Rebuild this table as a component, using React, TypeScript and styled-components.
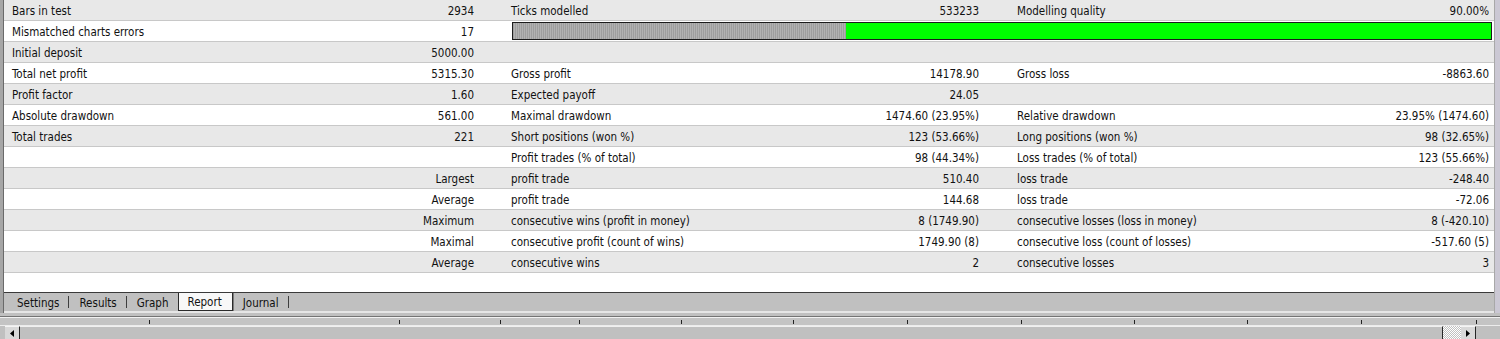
import React from "react";
import styled, { createGlobalStyle, css } from "styled-components";

const GlobalStyle = createGlobalStyle`
  html, body { margin: 0; padding: 0; }
  body {
    width: 1500px;
    height: 339px;
    overflow: hidden;
    background: #c0c0c0;
    font-family: "DejaVu Sans Condensed", "Liberation Sans", Arial, sans-serif;
    font-size: 11.5px;
    color: #111;
  }
`;

const Window = styled.div`
  display: flex;
  flex-direction: column;
  width: 1500px;
  height: 339px;
  overflow: hidden;
  background: #c0c0c0;
`;

const Body = styled.div`
  display: flex;
  height: 313px;
`;

const LeftEdge = styled.div`
  width: 3px;
  background: #a6a6a6;
  border-right: 1px solid #6a6a6a;
`;

const RightEdge = styled.div`
  width: 5px;
  background: #cbc8d4;
  border-left: 1px solid #a8a8a8;
`;

const Main = styled.div`
  flex: 1;
  display: flex;
  flex-direction: column;
  min-width: 0;
`;

const ReportPane = styled.div`
  flex: 1;
  background: #fff;
  overflow: hidden;
`;

const Row = styled.div<{ $shaded: boolean }>`
  display: grid;
  grid-template-columns: 241px 235px 265px 240px 255px 1fr;
  align-items: center;
  height: 21px;
  box-sizing: border-box;
  border-bottom: 1px solid #c8c8c8;
  background: ${(p) => (p.$shaded ? "#e8e8e8" : "#ffffff")};
`;

const cellText = css`
  white-space: nowrap;
  overflow: hidden;
  height: 20px;
  line-height: 22px;
`;

const Label = styled.div<{ $inset: number }>`
  ${cellText};
  padding-left: ${(p) => p.$inset}px;
`;

const Value = styled.div<{ $inset: number }>`
  ${cellText};
  text-align: right;
  padding-right: ${(p) => p.$inset}px;
`;

const BarCell = styled.div`
  grid-column: 3 / 7;
  display: flex;
  height: 18px;
  margin: 0 2px 0 32px;
  box-sizing: border-box;
  border: 1px solid #1c1c1c;
`;

const BarGrey = styled.div<{ $pct: number }>`
  width: ${(p) => p.$pct}%;
  background: repeating-linear-gradient(90deg, #9e9e9e 0 1px, #b2b2b2 1px 2px);
`;

const BarGreen = styled.div`
  flex: 1;
  background: #00ff00;
`;

const TabBar = styled.div`
  display: flex;
  align-items: flex-start;
  height: 21px;
  box-sizing: border-box;
  border-top: 1px solid #3a3a3a;
  border-bottom: 2px solid #e6e6e6;
  background: #c0c0c0;
  padding-left: 3px;
`;

const Tab = styled.div<{ $active?: boolean }>`
  display: flex;
  align-items: center;
  height: 18px;
  padding: 1px 9px 0 10px;
  box-sizing: border-box;
  ${(p) =>
    p.$active &&
    css`
      background: #f8f8f8;
      border: 1px solid #2a2a2a;
      border-top: none;
      padding: 1px 10px 0 9px;
      box-shadow: 1px 0 0 #7a7a7a;
    `}
`;

const TabSep = styled.span`
  width: 1px;
  height: 12px;
  margin-top: 3px;
  background: #3e3e3e;
`;

const Gap = styled.div`
  height: 3px;
`;

const ColumnHeader = styled.div`
  display: flex;
  height: 8px;
  border-top: 1px solid #747474;
  border-bottom: 1px solid #ececec;
  box-shadow: inset 0 1px 0 #f2f2f2;
  background: #c4c4c4;
`;

const HeaderCol = styled.div<{ $w: number }>`
  position: relative;
  flex: 0 0 ${(p) => p.$w}px;
  &::after {
    content: "";
    position: absolute;
    right: 0;
    bottom: 1px;
    width: 1px;
    height: 4px;
    background: #222;
  }
`;

const ScrollBar = styled.div`
  flex: 1;
  display: flex;
  padding-left: 5px;
`;

const ArrowButton = styled.div`
  width: 15px;
  display: flex;
  align-items: center;
  justify-content: center;
  background: #d8d8d8;
  border-right: 1px solid #262626;
  border-top: 1px solid #f4f4f4;
  box-sizing: border-box;
`;

const Track = styled.div`
  flex: 1;
  background: #c0c0c0;
  border-top: 1px solid #f0f0f0;
  border-right: 1px solid #262626;
`;

const Dither = styled.div`
  width: 18px;
  background: repeating-conic-gradient(#ffffff 0 25%, #c0c0c0 0 50%) 0 0 / 2px 2px;
`;

const Tail = styled.div`
  width: 24px;
`;

const Arrow = ({ dir }: { dir: "left" | "right" }) => (
  <svg width="4" height="7" viewBox="0 0 4 7">
    <polygon points={dir === "left" ? "4,0 4,7 0,3.5" : "0,0 0,7 4,3.5"} fill="#000" />
  </svg>
);

type RowData = string[];

const rows: RowData[] = [
  ["Bars in test", "2934", "Ticks modelled", "533233", "Modelling quality", "90.00%"],
  ["Mismatched charts errors", "17"],
  ["Initial deposit", "5000.00", "", "", "", ""],
  ["Total net profit", "5315.30", "Gross profit", "14178.90", "Gross loss", "-8863.60"],
  ["Profit factor", "1.60", "Expected payoff", "24.05", "", ""],
  ["Absolute drawdown", "561.00", "Maximal drawdown", "1474.60 (23.95%)", "Relative drawdown", "23.95% (1474.60)"],
  ["Total trades", "221", "Short positions (won %)", "123 (53.66%)", "Long positions (won %)", "98 (32.65%)"],
  ["", "", "Profit trades (% of total)", "98 (44.34%)", "Loss trades (% of total)", "123 (55.66%)"],
  ["", "Largest", "profit trade", "510.40", "loss trade", "-248.40"],
  ["", "Average", "profit trade", "144.68", "loss trade", "-72.06"],
  ["", "Maximum", "consecutive wins (profit in money)", "8 (1749.90)", "consecutive losses (loss in money)", "8 (-420.10)"],
  ["", "Maximal", "consecutive profit (count of wins)", "1749.90 (8)", "consecutive loss (count of losses)", "-517.60 (5)"],
  ["", "Average", "consecutive wins", "2", "consecutive losses", "3"],
];

const labelInsets = [8, 31, 32];
const valueInsets = [6, 6, 5];

const headerCols = [150, 250, 101, 79, 102, 112, 114, 114, 113, 113, 114, 115];

const tabs = ["Settings", "Results", "Graph", "Report", "Journal"];
const activeTab = "Report";

export default function App() {
  return (
    <>
      <GlobalStyle />
      <Window>
        <Body>
          <LeftEdge />
          <Main>
            <ReportPane>
              {rows.map((r, i) => (
                <Row key={i} $shaded={i % 2 === 0}>
                  {r.length === 2 ? (
                    <>
                      <Label $inset={labelInsets[0]}>{r[0]}</Label>
                      <Value $inset={valueInsets[0]}>{r[1]}</Value>
                      <BarCell>
                        <BarGrey $pct={34} />
                        <BarGreen />
                      </BarCell>
                    </>
                  ) : (
                    r.map((c, j) =>
                      j % 2 === 0 ? (
                        <Label key={j} $inset={labelInsets[j / 2]}>
                          {c}
                        </Label>
                      ) : (
                        <Value key={j} $inset={valueInsets[(j - 1) / 2]}>
                          {c}
                        </Value>
                      )
                    )
                  )}
                </Row>
              ))}
            </ReportPane>
            <TabBar>
              {tabs.map((t, i) => {
                const active = t === activeTab;
                const next = tabs[i + 1];
                const showSep = !active && next !== activeTab;
                return (
                  <React.Fragment key={t}>
                    <Tab $active={active}>{t}</Tab>
                    {showSep && <TabSep />}
                  </React.Fragment>
                );
              })}
            </TabBar>
          </Main>
          <RightEdge />
        </Body>
        <Gap />
        <ColumnHeader>
          {headerCols.map((w, i) => (
            <HeaderCol key={i} $w={w} />
          ))}
        </ColumnHeader>
        <ScrollBar>
          <ArrowButton>
            <Arrow dir="left" />
          </ArrowButton>
          <Track />
          <Dither />
          <ArrowButton>
            <Arrow dir="right" />
          </ArrowButton>
          <Tail />
        </ScrollBar>
      </Window>
    </>
  );
}
